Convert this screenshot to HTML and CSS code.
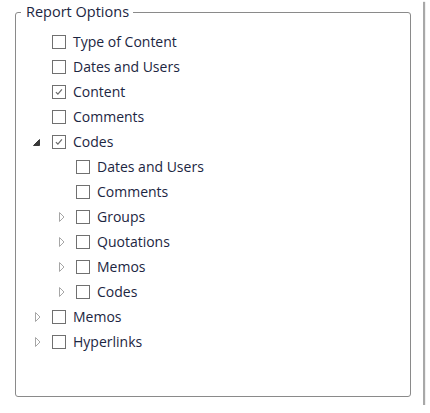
FILE: index.html
```html
<!DOCTYPE html>
<html lang="en">
<head>
    <meta charset="UTF-8">
    <meta name="viewport" content="width=device-width, initial-scale=1.0">
    <title>Report Options</title>
    <link rel="stylesheet" href="styles.css">
</head>
<body>
<div class="window">
    <fieldset class="group">
        <legend>Report Options</legend>
        <ul class="tree">
            <li class="row"><span class="toggle"></span><span class="box"></span><span class="label">Type of Content</span></li>
            <li class="row"><span class="toggle"></span><span class="box"></span><span class="label">Dates and Users</span></li>
            <li class="row"><span class="toggle"></span><span class="box checked"><svg viewBox="0 0 14 14"><path d="M3.4 7.2 L5.7 9.5 L10.4 4"/></svg></span><span class="label">Content</span></li>
            <li class="row"><span class="toggle"></span><span class="box"></span><span class="label">Comments</span></li>
            <li class="row"><span class="toggle"><svg class="open" viewBox="0 0 7 7"><path d="M6.5 0.5 L6.5 6.5 L0.5 6.5 Z"/></svg></span><span class="box checked"><svg viewBox="0 0 14 14"><path d="M3.4 7.2 L5.7 9.5 L10.4 4"/></svg></span><span class="label">Codes</span></li>
            <li class="row sub"><span class="toggle"></span><span class="box"></span><span class="label">Dates and Users</span></li>
            <li class="row sub"><span class="toggle"></span><span class="box"></span><span class="label">Comments</span></li>
            <li class="row sub"><span class="toggle"><svg class="closed" viewBox="0 0 6 10"><path d="M0.5 0.5 L5 5 L0.5 9.5 Z"/></svg></span><span class="box"></span><span class="label">Groups</span></li>
            <li class="row sub"><span class="toggle"><svg class="closed" viewBox="0 0 6 10"><path d="M0.5 0.5 L5 5 L0.5 9.5 Z"/></svg></span><span class="box"></span><span class="label">Quotations</span></li>
            <li class="row sub"><span class="toggle"><svg class="closed" viewBox="0 0 6 10"><path d="M0.5 0.5 L5 5 L0.5 9.5 Z"/></svg></span><span class="box"></span><span class="label">Memos</span></li>
            <li class="row sub"><span class="toggle"><svg class="closed" viewBox="0 0 6 10"><path d="M0.5 0.5 L5 5 L0.5 9.5 Z"/></svg></span><span class="box"></span><span class="label">Codes</span></li>
            <li class="row"><span class="toggle"><svg class="closed" viewBox="0 0 6 10"><path d="M0.5 0.5 L5 5 L0.5 9.5 Z"/></svg></span><span class="box"></span><span class="label">Memos</span></li>
            <li class="row"><span class="toggle"><svg class="closed" viewBox="0 0 6 10"><path d="M0.5 0.5 L5 5 L0.5 9.5 Z"/></svg></span><span class="box"></span><span class="label">Hyperlinks</span></li>
        </ul>
    </fieldset>
</div>
</body>
</html>
```

FILE: styles.css
```css
body {
    margin: 0;
    padding: 0;
    background: #ffffff;
    font-family: "Open Sans", "Noto Sans", sans-serif;
    color: #1c2642;
}
.window {
    width: 423px;
    height: 405px;
    padding-top: 2px;
    box-sizing: border-box;
    background: #ffffff;
    box-shadow: 2px 2px 1px #a8a8a8;
}
.group {
    margin: 0 0 0 15px;
    padding: 0;
    width: 394px;
    height: 393px;
    border: 1px solid #8a8a8a;
    border-radius: 3px;
}
.group legend {
    margin-left: 5px;
    padding: 0 4px 0 5px;
    font-size: 14.5px;
    line-height: 20px;
}
.tree {
    list-style: none;
    margin: 7px 0 0 0;
    padding: 0 0 0 17px;
}
.row {
    display: flex;
    align-items: center;
    height: 25px;
    font-size: 14px;
}
.row.sub {
    padding-left: 24px;
}
.toggle {
    width: 19px;
    display: flex;
    align-items: center;
}
.toggle svg.closed {
    width: 6px;
    height: 10px;
    margin-left: 2px;
}
.toggle svg.closed path {
    fill: #ffffff;
    stroke: #a6a6a6;
    stroke-width: 1;
}
.toggle svg.open {
    width: 7px;
    height: 7px;
    margin-top: 1px;
}
.toggle svg.open path {
    fill: #3a3a3a;
    stroke: #3a3a3a;
    stroke-width: 1;
}
.box {
    width: 14px;
    height: 14px;
    box-sizing: border-box;
    border: 1px solid #707070;
    background: #ffffff;
    display: flex;
}
.box svg {
    width: 12px;
    height: 12px;
}
.box svg path {
    fill: none;
    stroke: #6a6a6a;
    stroke-width: 1.4;
}
.label {
    margin-left: 7px;
}
```
